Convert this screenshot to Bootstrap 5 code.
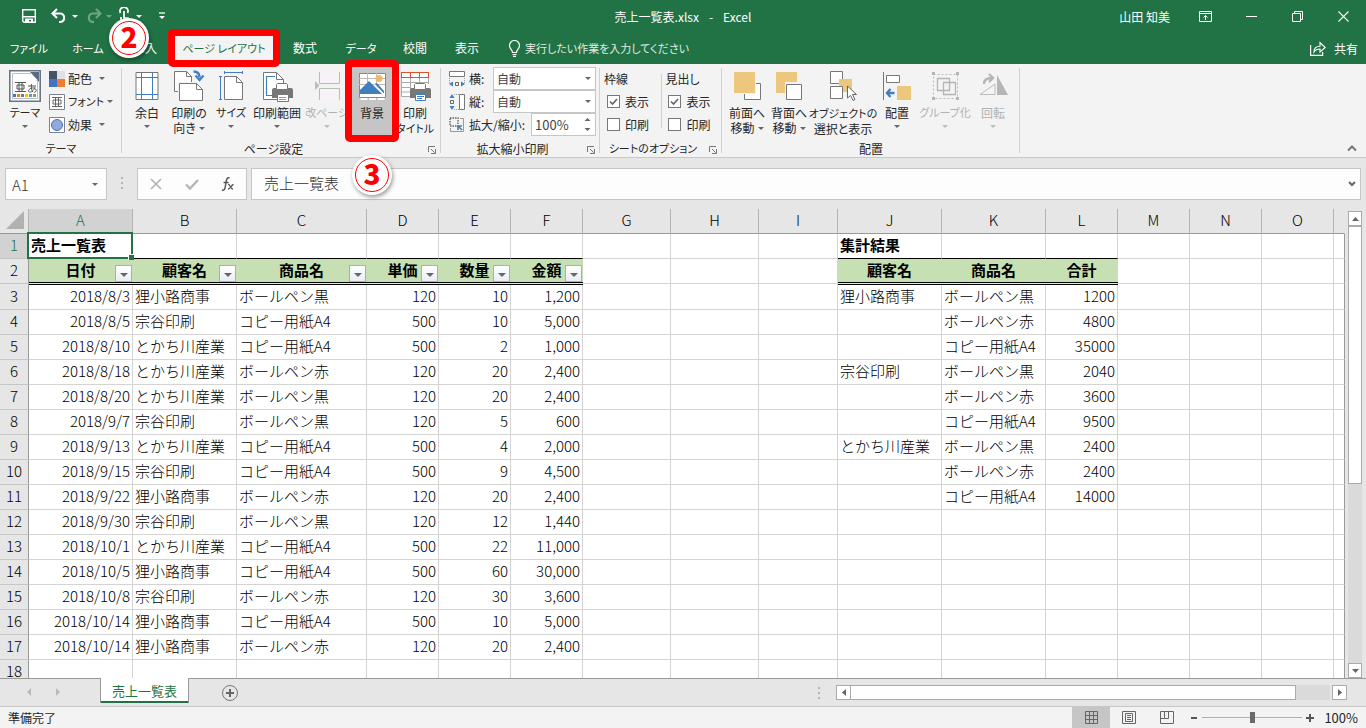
<!DOCTYPE html>
<html lang="ja">
<head>
<meta charset="utf-8">
<meta name="viewport" content="width=device-width, initial-scale=1">
<title>売上一覧表.xlsx - Excel</title>
<link href="https://cdn.jsdelivr.net/npm/bootstrap@5.3.0/dist/css/bootstrap.min.css" rel="stylesheet">
<style>
:root{--xl:#217346;--edge:#999;--ui:"Noto Sans CJK JP",sans-serif}
body{font-family:var(--ui);font-size:12px;font-weight:400;line-height:15px;color:#262626;background:#e6e6e6;font-feature-settings:"palt"}
button,input,select{font:inherit;font-feature-settings:inherit;color:inherit}
button{background:none;border:0;padding:0;white-space:nowrap}
svg{display:block;flex:none}
.kana{font-size:11px}
.caret-dn{display:inline-block;border:3px solid transparent;border-top-color:#666;border-bottom:0}
/* title bar */
.titlebar{display:grid;grid-template-columns:1fr auto 1fr;height:32px}
.doc-title{gap:10px}
.greenbar{background:var(--xl);color:#fff}
.greenbar .caret-dn{border-top-color:#fff}
.dim{opacity:.35}
.winbtn{width:46px;height:32px;display:flex;align-items:center;justify-content:center}
/* tabs */
.tabs{height:32px}
.tabs a{color:#fff;text-decoration:none;text-align:center;line-height:32px;height:32px;white-space:nowrap}
.tabs a.on{background:#f3f3f3;color:var(--xl)}
.tell{background:none;border:0;outline:0;width:240px;height:24px;padding:0}
.tell::placeholder{color:#e0ece4;opacity:1}
.w34{width:34px}.w38{width:38px}.w42{width:42px}.w48{width:48px}.w50{width:50px}.w54{width:54px}.w58{width:58px}.w60{width:60px}.w66{width:66px}.w104{width:104px}
/* ribbon */
.ribbon{height:94px;background:#f3f3f3;border-bottom:1px solid #c8c8c8}
.grp{display:flex;flex-direction:column;position:relative;flex:none}
.grp::after{content:"";position:absolute;right:0;top:4px;bottom:4px;width:1px;background:#d0d0d0}
.grp-body{height:77px;display:flex}
.grp-name{text-align:center}
.launch{position:absolute;right:5px;bottom:3px}
.big{display:flex;flex-direction:column;align-items:center;justify-content:flex-start;padding-top:6px;flex:none}
.big svg{margin-bottom:3px}
.big .caret-dn{margin-top:5px}
.two .caret-dn{margin:0 0 3px 3px}
.off{color:#b1b1b1}
.off .caret-dn{border-top-color:#c0c0c0}
.pressed{background:linear-gradient(#c5c5c5,#c5c5c5) 3px 3px/42px 68px no-repeat}
.rows{padding-top:3px;display:flex;flex-direction:column}
.line{height:23px;display:flex;align-items:center;white-space:nowrap}
.theme-opts{margin-left:7px}
.theme-opts .line{gap:3px}
.g-theme{width:122px}.g-page{width:319px}.g-scale{width:159px}.g-sheet{width:122px}.g-arr{width:298px}
.field{position:relative;height:23px;border:1px solid #c6c6c6;background:#fff;display:flex;align-items:center}
.field select,.field input{appearance:none;border:0;background:none;outline:0;width:100%;height:21px;padding:0 3px;color:#444}
.field input{font-size:13px}
.field .caret-dn{position:absolute;right:4px}
.f-wide{width:103px}.f-pct{width:65px}
.spin{position:absolute;right:4px}
.tick{appearance:none;width:13px;height:13px;border:1px solid #777;background:#fff;margin:0 5px 0 3px;flex:none}
.tick:checked{background:#fff url("data:image/svg+xml,%3Csvg xmlns='http://www.w3.org/2000/svg' viewBox='0 0 11 11'%3E%3Cpath d='M2 5.5l2.5 2.5L9 3' fill='none' stroke='%23666' stroke-width='1.7'/%3E%3C/svg%3E")}
.opt{width:57px}
.opt-sep{width:1px;height:54px;margin-top:10px;background:#d0d0d0}
/* callouts */
.callbox{position:absolute;border:7px solid #f00;border-radius:5px;z-index:5;pointer-events:none}
.callbox.tabbox{inset:-3px -4px}
.callbox.btnbox{inset:-4px -3px -1px -3px}
.callnum{position:absolute;z-index:6;width:40px;height:40px;border-radius:50%;background:#fff;box-shadow:1px 2px 4px rgba(0,0,0,.4);color:#f00;font-size:28px;font-weight:900;line-height:37px;text-align:center}
.callnum::before{content:"";position:absolute;inset:3px;border:1px solid #f00;border-radius:50%}
.num2{left:-63px;top:-14px}
.num3{left:4px;top:91px}
/* formula bar */
.fbar{height:51px;padding:10px 5px 9px;font-size:15px;font-weight:300;color:#333}
.fbox{height:32px;background:#fdfdfd;border:1px solid #c6c6c6;display:flex;align-items:center}
.fbox input{border:0;background:none;outline:0;min-width:0;flex:1;padding:0}
.namebox{width:102px;padding-left:6px}.fxbox{width:110px}
/* sheet */
.sheet{flex:1 1 0;min-height:0}
.gridwrap{overflow:hidden;min-width:0}
.xl{border-collapse:separate;border-spacing:0;table-layout:fixed;width:100%;font-size:15px;color:#000;line-height:20px;font-feature-settings:normal}
.xl th,.xl td{height:25px;padding:0 2px 2px;border-right:1px solid #d4d4d4;border-bottom:1px solid #d4d4d4;white-space:nowrap;font-weight:300;position:relative}
.xl td{background:#fff}
.xl thead th{text-align:center;background:#e6e6e6;border-bottom-color:var(--edge);border-right:1px solid #b4b4b4}
.xl tbody th{text-align:center;background:#e6e6e6;border-right-color:var(--edge);border-bottom-color:#c6c6c6;padding:0 0 2px}
.xl thead th:last-child{border-right-color:#e6e6e6}
.xl td:last-child{border-right-color:var(--edge)}
.xl th.cur{background:#d2d2d2;color:var(--xl)}
.xl tr.r3 td,.xl tr.r3 th{height:26px}
.xl td.num{text-align:right}
.xl td.ttl{font-weight:700}
.xl td.topb{border-bottom-color:#000}
.xl td.hd{background:#c6e0b4;border-right-color:#c6e0b4;border-bottom-color:#e2efda;font-weight:700;text-align:center}
.xl td.hd::after,.xl td.under::before{content:"";position:absolute;left:0;right:-1px;height:1px;background:#000}
.xl td.hd::after{bottom:0}
.xl td.under::before{top:0}
.sel{position:absolute;inset:-2px -1px -1px -2px;border:2px solid var(--xl);z-index:2}
.sel::after{content:"";position:absolute;right:-3px;bottom:-3px;width:6px;height:6px;background:var(--xl);border:solid #fff;border-width:1px 0 0 1px}
.flt{position:absolute;right:0;bottom:1px;width:17px;height:17px;border:1px solid #a9aeb8;background:linear-gradient(#fff,#e9edf3);display:flex;align-items:center;justify-content:center;padding-top:2px}
.flt .caret-dn{border-width:4px;border-bottom:0}
.vbar{width:14px;margin:2px 4px 0 3px}
.sbtn{width:15px;height:15px;border:1px solid #ababab;background:#fff;display:flex;align-items:center;justify-content:center;flex:none}
.track{flex:1;background:#dadada}
.thumb{background:#fff;border:1px solid #ababab}
.vbar .sbtn{width:14px}
.vbar .thumb{height:59%;width:14px}
.hbar{width:511px;margin-right:19px}
.hbar .track{margin-right:2px}
.hbar .thumb{width:93%;height:15px;border-left:0}
.tabrow{height:28px;border-top:1px solid var(--edge)}
.shtab{margin-top:-1px;height:25px;width:89px;background:#fff;border:solid var(--edge);border-width:0 1px;box-shadow:inset 0 -2px var(--xl);color:var(--xl);font-size:13px;text-align:center;text-decoration:none;line-height:26px;align-self:flex-start}
.status{height:22px;background:#f3f3f3;border-top:1px solid #c6c6c6}
.view{width:38px;height:21px;display:flex;align-items:center;justify-content:center}
.view.on{background:#c6c6c6}
.zoomer{appearance:none;width:100px;height:12px;background:linear-gradient(#b0b0b0,#b0b0b0) center/100% 1px no-repeat}
.zoomer::-webkit-slider-thumb{appearance:none;width:5px;height:11px;background:#6a6a6a}
.pct{margin:0 8px 0 10px;font-size:13px}
</style>
</head>
<body class="vh-100 d-flex flex-column overflow-hidden">

<header class="greenbar flex-shrink-0">
  <div class="titlebar align-items-center">
    <div class="d-flex align-items-center">
      <button class="ms-3 ps-1" aria-label="上書き保存"><svg width="18" height="16" viewBox="0 0 18 16"><path d="M2.700 1.700h12.600v12.600H4l-1.300-1.300z" fill="none" stroke="#fff" stroke-width="1.400"/><path d="M2 8h14v1.500H2zM5 10.500h8V15h-2v-3H9v3H5z" fill="#fff"/></svg></button>
      <button class="d-flex align-items-center ms-2 ps-1 gap-1" aria-label="元に戻す"><svg width="18" height="16" viewBox="0 0 18 16"><path d="M7 1L2.500 5.500 7 10M3 5.500h7.500a4.300 4.300 0 0 1 0 8.500H9" fill="none" stroke="#fff" stroke-width="2.100"/></svg><i class="caret-dn"></i></button>
      <button class="d-flex align-items-center dim ms-2 gap-1" aria-label="やり直し" disabled><svg width="16" height="16" viewBox="1 0 16 16"><path d="M11 1l4.500 4.500L11 10M15 5.500H7.500a4.300 4.300 0 0 0 0 8.500H9" fill="none" stroke="#fff" stroke-width="2.100"/></svg><i class="caret-dn"></i></button>
      <button class="d-flex align-items-center ms-1 gap-1" aria-label="タッチ/マウス モードの切り替え"><svg width="16" height="18" viewBox="0 0 16 18"><path d="M4.500 6a4 4 0 1 1 7 0M8 4v10M5 10v4l3 3h4v-6H8" fill="none" stroke="#fff" stroke-width="1.700"/></svg><i class="caret-dn"></i></button>
      <button class="ms-3" aria-label="クイック アクセス ツール バーのユーザー設定"><svg width="8" height="8" viewBox="0 0 8 8"><path d="M1 1h6" stroke="#fff" stroke-width="1.300"/><path d="M1 4h6L4 7z" fill="#fff"/></svg></button>
    </div>
    <div class="d-flex doc-title"><span>売上一覧表.xlsx</span><span>-</span><span>Excel</span></div>
    <div class="d-flex align-items-center justify-content-end">
      <span class="me-2 pe-1">山田 知美</span>
      <button class="winbtn" aria-label="リボンの表示オプション"><svg width="13" height="11" viewBox="0 0 13 11"><path d="M.5.500h12v10H.5zM.5 2.500h12M6.500 9V4.500M4.500 6.500l2-2 2 2" fill="none" stroke="#fff"/></svg></button>
      <button class="winbtn" aria-label="最小化"><svg width="11" height="11" viewBox="0 0 11 11"><path d="M0 5.500h11" stroke="#fff"/></svg></button>
      <button class="winbtn" aria-label="元に戻す（縮小）"><svg width="11" height="11" viewBox="0 0 11 11"><path d="M.5 2.500h8v8h-8zM2.500 2.500v-2h8v8h-2" fill="none" stroke="#fff"/></svg></button>
      <button class="winbtn" aria-label="閉じる"><svg width="11" height="11" viewBox="0 0 11 11"><path d="M.5.500l10 10M10.500.500l-10 10" stroke="#fff" stroke-width="1.100"/></svg></button>
    </div>
  </div>
  <nav class="tabs d-flex align-items-center">
    <a href="#" class="w58 kana">ファイル</a><a href="#" class="w60 kana">ホーム</a><a href="#" class="w54">挿入</a>
    <span class="position-relative"><a href="#" class="on w104 d-block kana">ページ レイアウト</a><span class="callbox tabbox"></span><span class="callnum num2">2</span></span>
    <a href="#" class="w58">数式</a><a href="#" class="w54 kana">データ</a><a href="#" class="w54">校閲</a><a href="#" class="w50">表示</a>
    <label class="d-flex align-items-center ms-3" for="tell"><svg width="13" height="17" viewBox="0 0 13 17"><path d="M4.500 12.500c0-3-3-3.500-3-7a5 5 0 0 1 10 0c0 3.500-3 4-3 7zM4.500 14.500h4M5 16.300h3" fill="none" stroke="#fff" stroke-width="1.200"/></svg></label>
    <input id="tell" class="tell ms-1 kana" aria-label="操作アシスト" placeholder="実行したい作業を入力してください">
    <button class="ms-auto me-2 d-flex align-items-center gap-2"><svg width="16" height="15" viewBox="0 0 16 15"><path d="M.6 4v10.400h12V11" fill="none" stroke="#fff" stroke-width="1.200"/><path d="M4 11c0-4 2.500-5.800 6-5.800V1.500L15.200 6.500 10 11V8C7.500 8 5.500 8.600 4 11z" fill="none" stroke="#fff" stroke-width="1.100"/></svg>共有</button>
  </nav>
</header>

<section class="ribbon d-flex flex-shrink-0" aria-label="ページ レイアウト">
  <div class="grp g-theme">
    <div class="grp-body ps-2">
      <button class="big w34"><svg width="32" height="32" viewBox="0 0 32 32"><path d="M.8.800h30.400v30.400H.8z" fill="#fff" stroke="#6d7583" stroke-width="1.600"/><path d="M3.500 3.500H21l7.500 7.500v17.500h-25z" fill="#fff" stroke="#9aa3b2" stroke-width=".7"/><path d="M21 2h9v10z" fill="#5b6a84"/><path d="M22 3.500V10h6.500z" fill="#fff"/><path d="M6 12.500h11M6 21.500h11M8 15h7v4H8zM10 12.500v9M13 12.500v9" fill="none" stroke="#555"/><path d="M19 16h8M22.500 14c-.5 3 0 5 1 8M26 17c-1 4-4 5.500-6 5-2-1 1-4.500 4.500-4 4 1 3 4 .5 4.500" fill="none" stroke="#555"/><path d="M4 24h3v3H4z" fill="#4472c4"/><path d="M8 24h3v3H8z" fill="#ed7d31"/><path d="M12 24h3v3h-3z" fill="#777"/><path d="M16 24h3v3h-3z" fill="#ffc000"/><path d="M20 24h3v3h-3z" fill="#5b9bd5"/><path d="M24 24h3v3h-3z" fill="#70ad47"/></svg><span class="kana">テーマ</span><i class="caret-dn"></i></button>
      <div class="rows theme-opts">
        <button class="line"><svg width="16" height="16" viewBox="0 0 16 16"><path d="M0 0h8v8H0z" fill="#44546a"/><path d="M8 0h8v8H8z" fill="#dde1e6"/><path d="M0 8h8v8H0z" fill="#4472c4"/><path d="M8 8h8v8H8z" fill="#ed7d31"/></svg>配色<i class="caret-dn ms-1"></i></button>
        <button class="line"><svg width="16" height="16" viewBox="0 0 16 16"><path d="M.5.500h15v15H.5z" fill="#fff" stroke="#7a8294"/><path d="M3 3.500h10M3 12.500h10M4 6h8v4H4zM6.500 3.500v9M9.500 3.500v9" fill="none" stroke="#666"/></svg><span class="kana">フォント</span><i class="caret-dn"></i></button>
        <button class="line"><svg width="16" height="16" viewBox="0 0 16 16"><path d="M.5.500h15v15H.5z" fill="#fff" stroke="#7a8294"/><circle cx="8" cy="8" r="5.500" fill="#8faadc" stroke="#4a72b8"/></svg>効果<i class="caret-dn ms-1"></i></button>
      </div>
    </div>
    <div class="grp-name kana">テーマ</div>
  </div>

  <div class="grp g-page">
    <div class="grp-body ps-2">
      <button class="big w34"><svg width="32" height="32" viewBox="0 0 32 32"><path d="M5 2.500h22v27H5z" fill="#fff" stroke="#777"/><path d="M10.500 3v26M21.500 3v26M5 7.500h22M5 24.500h22" stroke="#3f7fbf" fill="none"/></svg>余白<i class="caret-dn"></i></button>
      <button class="big w50 two"><svg width="32" height="32" viewBox="0 0 32 32"><path d="M1.500 1.500h12l5 5v15h-17z" fill="#fff" stroke="#777"/><path d="M13.500 1.500v5h5" fill="none" stroke="#777"/><path d="M5 12h19l7 7v13H5z" fill="#f3f3f3"/><path d="M6.500 13.500h17l6 6v11h-23z" fill="#fff" stroke="#777"/><path d="M23.500 13.500v6h6" fill="none" stroke="#777"/><path d="M20.500 1.500c4.500 0 6 2 6 6" fill="none" stroke="#4180bd" stroke-width="2.500"/><path d="M22.500 5.500l4 4.500 4-4.500" fill="none" stroke="#4180bd" stroke-width="2.200"/></svg><span>印刷の<br>向き<i class="caret-dn"></i></span></button>
      <button class="big w34"><svg width="32" height="32" viewBox="0 0 32 32"><path d="M9.500 6.500h12l6 6v17h-18z" fill="#fff" stroke="#777"/><path d="M21.500 6.500v6h6" fill="none" stroke="#777"/><path d="M9 2.500h19M9.500 1v3M27.500 1v3M5.500 6v23M4 6.500h3M4 29.500h3" fill="none" stroke="#3f7fbf"/></svg><span class="kana">サイズ</span><i class="caret-dn"></i></button>
      <button class="big w58"><svg width="32" height="32" viewBox="0 0 32 32"><path d="M2.500 2.500h13l7 7v20h-20z" fill="#fff" stroke="#777"/><path d="M15.500 2.500v7h7" fill="none" stroke="#777"/><path d="M14 6.500H5.500v19H12" fill="none" stroke="#3f7fbf" stroke-width="1.200"/><path d="M11 20q0-2 2-2h17q2 0 2 2v8H11z" fill="#777"/><path d="M16.500 13.500h9l1 1v5h-11v-5zM16.500 24.500h11v7h-11z" fill="#fff" stroke="#777"/><path d="M18 27.500h7M18 29.500h7" stroke="#999"/></svg>印刷範囲<i class="caret-dn"></i></button>
      <button class="big w42 off" disabled><svg width="32" height="32" viewBox="0 0 32 32"><path d="M8.500 2v11.500h20V2M8.500 30V18.500h20V30" fill="#f7f2f7" stroke="#bbb"/><path d="M4 11l4.500 4.500L4 20z" fill="#bbb"/></svg><span class="kana">改ページ</span><i class="caret-dn"></i></button>
      <div class="position-relative"><button class="big w48 pressed h-100"><svg width="32" height="32" viewBox="0 0 32 32"><path d="M3.500 3.500h26v24h-26z" fill="#fff" stroke="#888"/><path d="M3 8.500h26M3 14.500h26M11.500 3v10M20.500 3v10" stroke="#bbb"/><path d="M4.500 29h7M13 29h7M21.500 29h7" stroke="#fff" stroke-width="2"/><circle cx="23" cy="8.500" r="3.500" fill="#edb96a"/><path d="M4 24v-4l9-9 13 13z" fill="#3f7fbf"/><path d="M18 14l3-1 7 8v3z" fill="#3f7fbf"/><path d="M16.500 12l11.500 12" stroke="#fff" stroke-width="1"/></svg>背景</button><span class="callbox btnbox"></span><span class="callnum num3">3</span></div>
      <button class="big w38 two"><svg width="32" height="32" viewBox="0 0 32 32"><path d="M2.500 2.500h27v24h-27z" fill="#fff"/><path d="M2 2.500h28M2 7.500h28M2.500 2v6M11.500 2v6M20.500 2v6M29.500 2v6" stroke="#d9532c" fill="none"/><path d="M2.500 8v18.500H11M2 12.500h28M2 17.500h9M2 22h9M11.500 8v18M20.500 8v6M29.500 8v6" stroke="#aaa" fill="none"/><path d="M11 20q0-2 2-2h17q2 0 2 2v8H11z" fill="#777"/><path d="M16.500 13.500h9l1 1v5h-11v-5z" fill="#fff" stroke="#777"/><path d="M16.500 24.500h10v6h-10z" fill="#fff" stroke="#3f7fbf"/><path d="M18 26.500h7M18 28.500h5" stroke="#3f7fbf"/></svg><span>印刷<br><span class="kana">タイトル</span></span></button>
    </div>
    <div class="grp-name pe-3">ページ設定</div>
    <svg class="launch" width="8" height="8" viewBox="0 0 8 8"><path d="M.5 6V.5H7" fill="none" stroke="#777"/><path d="M3 3l3.500 3.500M7.500 3v4.500H3" fill="none" stroke="#777"/></svg>
  </div>

  <div class="grp g-scale">
    <div class="rows grp-body ps-2 pe-1">
      <div class="line"><svg class="me-1" width="16" height="16" viewBox="0 0 16 16"><path d="M.5.500h15v5H.5z" fill="#fff" stroke="#777"/><path d="M.5 7v5M15.500 7v5" stroke="#999" stroke-dasharray="1"/><path d="M6.500 11.500h3v3h-3z" fill="none" stroke="#666"/><path d="M4 10.500v5L0 13zM12 10.500v5l4-2.500z" fill="#3f7fbf"/></svg><label for="fw">横:</label><span class="field ms-auto f-wide"><select id="fw"><option>自動</option></select><i class="caret-dn"></i></span></div>
      <div class="line"><svg class="me-1" width="16" height="16" viewBox="0 0 16 16"><path d="M10.500.500h5v15h-5z" fill="#fff" stroke="#777"/><path d="M5 .5h5M5 15.500h5" stroke="#999" stroke-dasharray="1"/><path d="M1.500 6.500h3v3h-3z" fill="none" stroke="#666"/><path d="M.5 4h5L3 0zM.5 12h5L3 16z" fill="#3f7fbf"/></svg><label for="fh">縦:</label><span class="field ms-auto f-wide"><select id="fh"><option>自動</option></select><i class="caret-dn"></i></span></div>
      <div class="line"><svg class="me-1" width="16" height="16" viewBox="0 0 16 16"><path d="M1 1h8v8H1z" fill="none" stroke="#666" stroke-width="1.400" stroke-dasharray="1.500 1"/><path d="M11 1.500h3.500v13H1.500V11" fill="none" stroke="#999"/><path d="M13 13L9.500 9.500M9 13V9h4" fill="none" stroke="#3f7fbf" stroke-width="1.600"/></svg><label for="fs">拡大/縮小:</label><span class="field ms-auto f-pct"><input id="fs" value="100%"><svg class="spin" width="7" height="15" viewBox="0 0 7 15"><path d="M.5 4L3.500 1l3 3zM.5 11l3 3 3-3z" fill="#666"/></svg></span></div>
    </div>
    <div class="grp-name pe-3">拡大縮小印刷</div>
    <svg class="launch" width="8" height="8" viewBox="0 0 8 8"><path d="M.5 6V.5H7" fill="none" stroke="#777"/><path d="M3 3l3.500 3.500M7.500 3v4.500H3" fill="none" stroke="#777"/></svg>
  </div>

  <div class="grp g-sheet">
    <div class="grp-body ps-1">
      <div class="rows opt"><div class="line">枠線</div><label class="line"><input class="tick" type="checkbox" checked>表示</label><label class="line"><input class="tick" type="checkbox">印刷</label></div>
      <div class="opt-sep"></div>
      <div class="rows opt ms-1"><div class="line">見出し</div><label class="line"><input class="tick" type="checkbox" checked>表示</label><label class="line"><input class="tick" type="checkbox">印刷</label></div>
    </div>
    <div class="grp-name pe-3 kana">シートのオプション</div>
    <svg class="launch" width="8" height="8" viewBox="0 0 8 8"><path d="M.5 6V.5H7" fill="none" stroke="#777"/><path d="M3 3l3.500 3.500M7.500 3v4.500H3" fill="none" stroke="#777"/></svg>
  </div>

  <div class="grp g-arr">
    <div class="grp-body ps-1">
      <button class="big w42 two"><svg width="32" height="32" viewBox="0 0 32 32"><path d="M13.500 13.500h16v16h-16z" fill="#fff" stroke="#777"/><path d="M2 1h23v23H2z" fill="#f3f3f3"/><path d="M3 2h21v21H3z" fill="#eec77e"/></svg><span>前面へ<br>移動<i class="caret-dn"></i></span></button>
      <button class="big w42 two"><svg width="32" height="32" viewBox="0 0 32 32"><path d="M3 2h21v21H3z" fill="#eec77e"/><path d="M12 12h20v20H12z" fill="#f3f3f3"/><path d="M13.500 14.500h15v15h-15z" fill="#fff" stroke="#777"/></svg><span>背面へ<br>移動<i class="caret-dn"></i></span></button>
      <button class="big w66 two"><svg width="32" height="32" viewBox="0 0 32 32"><path d="M3.500 1.500h12v12h-12zM3.500 16.500h12v12h-12z" fill="#fff" stroke="#777"/><path d="M12 9h13v13h-9v-6h-4z" fill="#eec77e"/><path d="M20.500 16v12l3-2.500 2.500 5 2-1-2.500-5h4z" fill="#fff" stroke="#666"/></svg><span><span class="kana">オブジェクトの</span><br>選択と表示</span></button>
      <button class="big w42"><svg width="32" height="32" viewBox="0 0 32 32"><path d="M2.500 2v28" stroke="#777"/><path d="M5.500 5.500h13v7h-13z" fill="#fff" stroke="#777"/><path d="M16 16h14v14H16z" fill="#eec77e"/><path d="M9.500 19L6 23l3.500 4M6 23h7.500" fill="none" stroke="#3f7fbf" stroke-width="2.400"/></svg>配置<i class="caret-dn"></i></button>
      <button class="big w54 off" disabled><svg width="32" height="32" viewBox="0 0 32 32"><path d="M4.500 4.500h24v24h-24z" fill="none" stroke="#bbb" stroke-dasharray="2 2"/><path d="M8.500 8.500h12v12h-12zM14.500 12.500h12v12h-12z" fill="#f7f2f7" fill-opacity=".6" stroke="#b5b5b5" stroke-width="1.300"/><path d="M3 2h3v3H3zM27 2h3v3h-3zM3 27h3v3H3zM27 27h3v3h-3z" fill="#b5b5b5"/></svg><span class="kana">グループ化</span><i class="caret-dn"></i></button>
      <button class="big w42 off" disabled><svg width="32" height="32" viewBox="0 0 32 32"><path d="M3 24.500h15V14z" fill="#f7f2f7" stroke="#bbb"/><path d="M20 5v20h11z" fill="#b5b5b5"/><path d="M7 14c0-4 3-6 8-6M12 4l4 4-4 4" fill="none" stroke="#b5b5b5" stroke-width="2.300"/></svg>回転<i class="caret-dn"></i></button>
    </div>
    <div class="grp-name">配置</div>
  </div>
  <button class="ms-auto me-2 mb-1 align-self-end" aria-label="リボンを折りたたむ"><svg width="12" height="9" viewBox="0 0 12 9"><path d="M2 6.500l4-4 4 4" fill="none" stroke="#777" stroke-width="2"/></svg></button>
</section>

<section class="fbar d-flex flex-shrink-0" aria-label="数式バー">
  <div class="fbox namebox"><input aria-label="名前ボックス" value="A1"><i class="caret-dn me-2"></i></div>
  <svg width="30" height="32" viewBox="0 0 30 32"><path d="M14 9h2v2h-2zM14 14h2v2h-2zM14 19h2v2h-2z" fill="#b5b5b5"/></svg>
  <div class="fbox fxbox justify-content-around">
    <button aria-label="キャンセル"><svg width="14" height="14" viewBox="0 0 14 14"><path d="M2 2l10 10M12 2L2 12" stroke="#b5b5b5" stroke-width="1.700"/></svg></button>
    <button aria-label="入力"><svg width="14" height="14" viewBox="0 0 14 14"><path d="M1 7.500l4 4L13 3" fill="none" stroke="#b5b5b5" stroke-width="2.300"/></svg></button>
    <button aria-label="関数の挿入"><svg width="14" height="16" viewBox="0 0 14 16"><path d="M8.500 2C6.500 1 5.700 2.500 5.300 5L4 12c-.4 2-1.500 2.500-3 2M2.500 6.500h5" fill="none" stroke="#555" stroke-width="1.400"/><path d="M7 8.500c2-1 2.500 5 5 4.500M12.500 8.500c-2 0-3 4.500-5.500 4.500" fill="none" stroke="#555" stroke-width="1.300"/></svg></button>
  </div>
  <div class="fbox flex-fill ms-1 ps-2 pe-1"><input class="ps-1 pb-1" aria-label="数式" value="売上一覧表"><svg width="8" height="6" viewBox="0 0 8 6"><path d="M1 1l3 3 3-3" fill="none" stroke="#666" stroke-width="2"/></svg></div>
</section>

<main class="sheet d-flex">
  <div class="gridwrap flex-fill">
    <table class="xl" id="grid"><colgroup></colgroup><thead></thead><tbody></tbody></table>
  </div>
  <div class="vbar d-flex flex-column flex-shrink-0">
    <button class="sbtn" aria-label="上へスクロール"><svg width="7" height="4" viewBox="0 0 7 4"><path d="M0 4l3.500-4L7 4z" fill="#666"/></svg></button>
    <div class="track"><div class="thumb"></div></div>
    <button class="sbtn" aria-label="下へスクロール"><svg width="7" height="4" viewBox="0 0 7 4"><path d="M0 0l3.500 4L7 0z" fill="#666"/></svg></button>
  </div>
</main>

<div class="tabrow d-flex align-items-center flex-shrink-0">
  <svg width="100" height="27" viewBox="0 0 100 27"><path d="M31 9v8l-4-4zM56 9v8l4-4z" fill="#bbb"/></svg>
  <a href="#" class="shtab">売上一覧表</a>
  <button class="ms-4 ps-2" aria-label="新しいシート"><svg width="18" height="18" viewBox="0 0 18 18"><circle cx="9" cy="9" r="7.500" fill="none" stroke="#777"/><path d="M9 5v8M5 9h8" stroke="#666" stroke-width="2"/></svg></button>
  <svg class="ms-auto me-3" width="3" height="12" viewBox="0 0 3 12"><path d="M1 0h2v2H1zM1 5h2v2H1zM1 10h2v2H1z" fill="#b5b5b5"/></svg>
  <div class="hbar d-flex">
    <button class="sbtn" aria-label="左へスクロール"><svg width="4" height="7" viewBox="0 0 4 7"><path d="M4 0L0 3.500 4 7z" fill="#666"/></svg></button>
    <div class="track"><div class="thumb"></div></div>
    <button class="sbtn" aria-label="右へスクロール"><svg width="4" height="7" viewBox="0 0 4 7"><path d="M0 0l4 3.500L0 7z" fill="#666"/></svg></button>
  </div>
</div>

<footer class="status d-flex align-items-center flex-shrink-0">
  <span class="ms-1 ps-1">準備完了</span>
  <button class="view on ms-auto" aria-label="標準"><svg width="13" height="13" viewBox="0 0 13 13"><path d="M.5.500h12v12H.5zM.5 4.500h12M.5 8.500h12M4.500.500v12M8.500.500v12" fill="none" stroke="#666"/></svg></button>
  <button class="view" aria-label="ページ レイアウト表示"><svg width="14" height="13" viewBox="0 0 14 13"><path d="M.5.500h13v12H.5zM3.500 2.500h7v8h-7zM5 4.500h4M5 6.500h4M5 8.500h4" fill="none" stroke="#666"/></svg></button>
  <button class="view" aria-label="改ページ プレビュー"><svg width="14" height="13" viewBox="0 0 14 13"><path d="M.5.500h13v12H.5zM4.500.500v7h4v-7M.5 7.500h4" fill="none" stroke="#666"/></svg></button>
  <button class="ms-1" aria-label="縮小"><svg width="8" height="8" viewBox="0 0 8 8"><path d="M1 4h6" stroke="#555" stroke-width="2"/></svg></button>
  <input class="zoomer mx-1" type="range" aria-label="ズーム" min="0" max="100" value="50">
  <button aria-label="拡大"><svg width="8" height="8" viewBox="0 0 8 8"><path d="M0 4h8M4 0v8" stroke="#555" stroke-width="2"/></svg></button>
  <span class="pct">100%</span>
</footer>

<script>
const widths = [29,104,104,130,72,72,72,88,88,79,104,104,72,72,72,72];
const letters = [...'ABCDEFGHIJKLMNO', ''];
const P = '狸小路商事', S = '宗谷印刷', T = 'とかち川産業';
const K = 'ボールペン黒', R = 'ボールペン赤', C = 'コピー用紙A4';
const sales = [
  ['2018/8/3',P,K,120,10,'1,200'],['2018/8/5',S,C,500,10,'5,000'],['2018/8/10',T,C,500,2,'1,000'],
  ['2018/8/18',T,R,120,20,'2,400'],['2018/8/20',T,K,120,20,'2,400'],['2018/9/7',S,K,120,5,'600'],
  ['2018/9/13',T,C,500,4,'2,000'],['2018/9/15',S,C,500,9,'4,500'],['2018/9/22',P,R,120,20,'2,400'],
  ['2018/9/30',S,K,120,12,'1,440'],['2018/10/1',T,C,500,22,'11,000'],['2018/10/5',P,C,500,60,'30,000'],
  ['2018/10/8',S,R,120,30,'3,600'],['2018/10/14',P,C,500,10,'5,000'],['2018/10/14',P,R,120,20,'2,400']];
const totals = [[P,K,1200],['',R,4800],['',C,35000],[S,K,2040],['',R,3600],['',C,9500],[T,K,2400],['',R,2400],['',C,14000]];
const heads = {A:'日付',B:'顧客名',C:'商品名',D:'単価',E:'数量',F:'金額',J:'顧客名',K:'商品名',L:'合計'};
const cell = (r, L) => {
  const left = 'ABCDEF'.indexOf(L), right = 'JKL'.indexOf(L);
  const inTable = L && (left >= 0 || right >= 0);
  if (!inTable) return '<td></td>';
  if (r === 1) return `<td class="topb ttl">${L === 'A' ? '売上一覧表<span class="sel"></span>' : L === 'J' ? '集計結果' : ''}</td>`;
  if (r === 2) return `<td class="hd">${heads[L]}${left >= 0 ? '<button class="flt" aria-label="フィルター"><i class="caret-dn"></i></button>' : ''}</td>`;
  const v = (left >= 0 ? sales[r-3]?.[left] : totals[r-3]?.[right]) ?? '';
  const cls = ['A','D','E','F','L'].includes(L) ? 'num' : '';
  return `<td class="${cls}${r === 3 ? ' under' : ''}">${v}</td>`;
};
const g = document.getElementById('grid');
g.querySelector('colgroup').innerHTML = widths.map(w => `<col style="width:${w}px">`).join('') + '<col>';
g.querySelector('thead').innerHTML = '<tr><th aria-label="すべて選択"><svg width="18" height="18" viewBox="0 0 18 18" class="ms-1"><path d="M18 0v18H0z" fill="#b1b1b1"/></svg></th>' + letters.map(l => `<th class="${l === 'A' ? 'cur' : ''}">${l}</th>`).join('') + '</tr>';
g.querySelector('tbody').innerHTML = Array.from({length:18}, (_, i) => i + 1).map(r =>
  `<tr class="r${r}"><th class="${r === 1 ? 'cur' : ''}">${r}</th>${letters.map(l => cell(r, l)).join('')}</tr>`).join('');
</script>
<script src="https://cdn.jsdelivr.net/npm/bootstrap@5.3.0/dist/js/bootstrap.bundle.min.js"></script>
</body>
</html>
